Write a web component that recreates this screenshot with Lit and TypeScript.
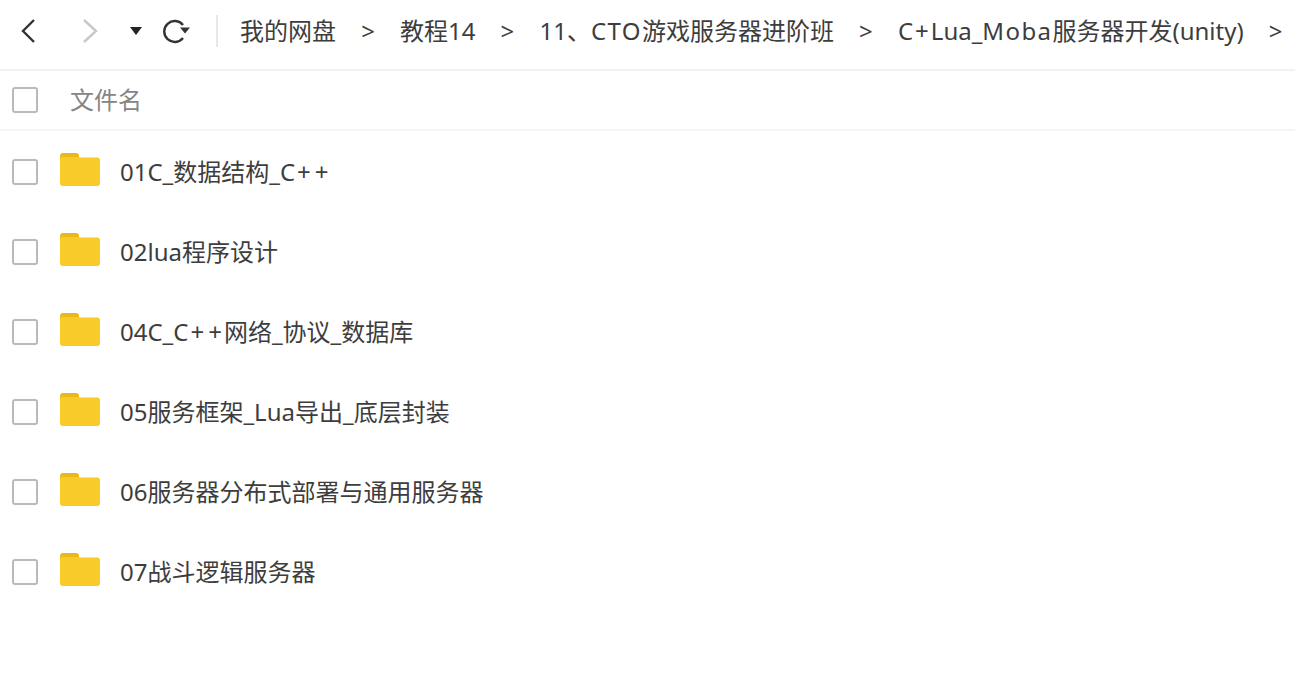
import { LitElement, html, css, svg } from "lit";
import { customElement } from "lit/decorators.js";

const crumbs = ["我的网盘", "教程14", "11、CTO游戏服务器进阶班", "C+Lua_Moba服务器开发(unity)"];
const files = [
  "01C_数据结构_C++",
  "02lua程序设计",
  "04C_C++网络_协议_数据库",
  "05服务框架_Lua导出_底层封装",
  "06服务器分布式部署与通用服务器",
  "07战斗逻辑服务器",
];

const folder = svg`<svg class="folder" width="40" height="34" viewBox="0 0 40 34">
  <path d="M0 3a3 3 0 0 1 3-3h13a3 3 0 0 1 3 3v3H0z" fill="#e9b91c"/>
  <path d="M0 6a2 2 0 0 1 2-2h17l1 0.5h17a3 3 0 0 1 3 3V30a3 3 0 0 1-3 3H3a3 3 0 0 1-3-3z" fill="#f8cb2b"/>
</svg>`;

/* The reference's Latin face draws "+", "CTO" and "Moba" wider than Noto Sans. */
const label = (text: string) =>
  text.split(/(\+|CTO|Moba)/).map((part) => {
    if (part === "+") return html`<span class="plus">+</span>`;
    if (part === "CTO" || part === "Moba") return html`<span class="wide">${part}</span>`;
    return part;
  });

@customElement("app-root")
export class AppRoot extends LitElement {
  static styles = css`
    :host {
      display: block;
      width: 1295px;
      height: 698px;
      overflow: hidden;
      background: #fff;
      font-family: "Noto Sans", "Noto Sans CJK SC", sans-serif;
      color: #333;
    }
    .toolbar {
      display: flex;
      align-items: center;
      height: 69px;
      border-bottom: 2px solid #f2f2f2;
      white-space: nowrap;
      overflow: hidden;
    }
    .nav {
      display: flex;
      align-items: center;
      flex: none;
      width: 216px;
      height: 32px;
      margin-top: -7px;
      border-right: 2px solid #e8e8e8;
    }
    .nav svg { display: block; flex: none; }
    .back { margin-left: 20px; }
    .forward { margin-left: 46px; }
    .drop { margin-left: 32px; }
    .refresh { margin-left: 21px; margin-top: -1px; }
    .crumbs {
      display: flex;
      align-items: center;
      margin-left: 22px;
      padding-bottom: 8px;
      font-size: 24px;
      line-height: 32px;
      color: #3d3d3d;
    }
    .sep {
      width: 64px;
      text-align: center;
      font-size: 24px;
      flex: none;
    }
    .plus { padding: 0 2px; }
    .wide { letter-spacing: 1.4px; }
    .head {
      display: flex;
      align-items: center;
      height: 58px;
      border-bottom: 2px solid #f5f5f5;
      font-size: 24px;
      color: #858585;
    }
    .box {
      flex: none;
      width: 22px;
      height: 22px;
      margin-left: 12px;
      border: 2px solid #b9b9b9;
      border-radius: 3px;
    }
    .head .title { margin-left: 32px; padding-bottom: 4px; }
    .list { padding-top: 1px; }
    .row {
      display: flex;
      align-items: center;
      height: 80px;
      font-size: 24px;
      color: #3d3d3d;
    }
    .folder { flex: none; margin-left: 22px; margin-top: -4px; }
    .row .name { margin-left: 20px; padding-bottom: 4px; }
  `;

  render() {
    return html`
      <div class="toolbar">
        <div class="nav">
          <svg class="back" width="16" height="26" viewBox="0 0 16 26"><path d="M14 2 3 13l11 11" fill="none" stroke="#333" stroke-width="2.4"/></svg>
          <svg class="forward" width="16" height="26" viewBox="0 0 16 26"><path d="M2 2l12 11L2 24" fill="none" stroke="#c8c8c8" stroke-width="2.4"/></svg>
          <svg class="drop" width="12" height="8" viewBox="0 0 12 8"><path d="M0 0h12L6 8z" fill="#222"/></svg>
          <svg class="refresh" width="28" height="26" viewBox="0 0 28 26"><path d="M20 7A10.5 10.5 0 1 0 20 20" fill="none" stroke="#333" stroke-width="2.4"/><path d="M17 9.5h10l-5 6z" fill="#333"/></svg>
        </div>
        <div class="crumbs">
          ${crumbs.map((c) => html`<span>${label(c)}</span><span class="sep">&gt;</span>`)}
        </div>
      </div>
      <div class="head"><div class="box"></div><span class="title">文件名</span></div>
      <div class="list">
        ${files.map((f) => html`<div class="row"><div class="box"></div>${folder}<span class="name">${label(f)}</span></div>`)}
      </div>
    `;
  }
}
